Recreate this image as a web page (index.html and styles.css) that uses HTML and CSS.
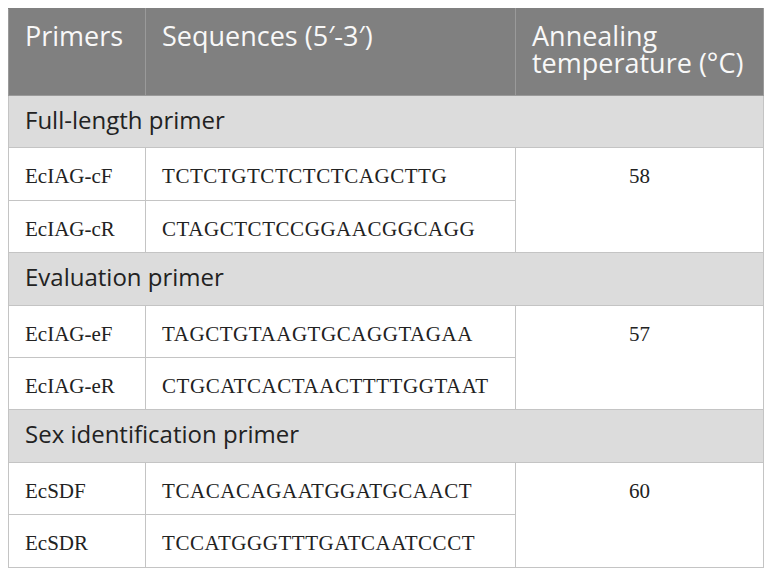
FILE: index.html
```html
<!DOCTYPE html>
<html>
<head>
<meta charset="utf-8">
<link rel="stylesheet" href="styles.css">
</head>
<body>
<table class="primers">
  <colgroup>
    <col class="c1"><col class="c2"><col class="c3">
  </colgroup>
  <thead>
    <tr class="head">
      <th>Primers</th>
      <th>Sequences (5′-3′)</th>
      <th>Annealing temperature (°C)</th>
    </tr>
  </thead>
  <tbody>
    <tr class="section"><td colspan="3">Full-length primer</td></tr>
    <tr class="data"><td>EcIAG-cF</td><td class="seq">TCTCTGTCTCTCTCAGCTTG</td><td rowspan="2" class="temp">58</td></tr>
    <tr class="data"><td>EcIAG-cR</td><td class="seq">CTAGCTCTCCGGAACGGCAGG</td></tr>
    <tr class="section"><td colspan="3">Evaluation primer</td></tr>
    <tr class="data"><td>EcIAG-eF</td><td class="seq">TAGCTGTAAGTGCAGGTAGAA</td><td rowspan="2" class="temp">57</td></tr>
    <tr class="data"><td>EcIAG-eR</td><td class="seq">CTGCATCACTAACTTTTGGTAAT</td></tr>
    <tr class="section"><td colspan="3">Sex identification primer</td></tr>
    <tr class="data"><td>EcSDF</td><td class="seq">TCACACAGAATGGATGCAACT</td><td rowspan="2" class="temp">60</td></tr>
    <tr class="data"><td>EcSDR</td><td class="seq">TCCATGGGTTTGATCAATCCCT</td></tr>
  </tbody>
</table>
</body>
</html>
```

FILE: styles.css
```css
html, body {
  margin: 0;
  padding: 0;
  background: #ffffff;
}
body {
  padding: 8px;
}
.primers {
  border-collapse: collapse;
  table-layout: fixed;
  width: 755px;
  border: 1px solid #c4c4c4;
}
.c1 { width: 137px; }
.c2 { width: 370px; }
.c3 { width: 248px; }
.primers th,
.primers td {
  border: 1px solid #c4c4c4;
  vertical-align: top;
  text-align: left;
  padding: 0 16px;
}
.head th {
  background: #808080;
  color: #f8f8f8;
  font-family: "Open Sans", sans-serif;
  font-weight: 400;
  font-size: 27px;
  line-height: 27px;
  padding-top: 13px;
  height: 87px;
  box-sizing: border-box;
  border-color: #9a9a9a;
  border-top-color: #808080;
}
.section td {
  background: #dcdcdc;
  color: #222222;
  font-family: "Open Sans", sans-serif;
  font-size: 24px;
  line-height: 27.6px;
  padding-top: 10px;
  height: 52.4px;
  box-sizing: border-box;
}
.data td {
  font-family: "Liberation Serif", serif;
  font-size: 21px;
  line-height: 24px;
  color: #222222;
  padding-top: 16px;
  height: 52.4px;
  box-sizing: border-box;
}
.data td.seq {
  letter-spacing: 0.55px;
}
.data td.temp {
  text-align: center;
}
```
